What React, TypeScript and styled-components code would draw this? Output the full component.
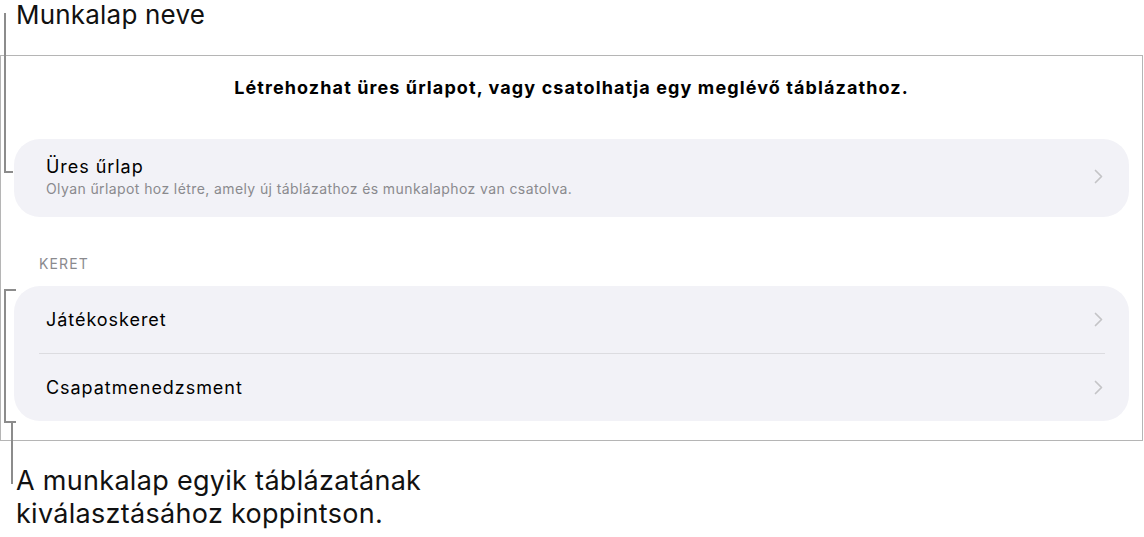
import React from "react";
import styled, { createGlobalStyle } from "styled-components";

const GlobalStyle = createGlobalStyle`
  html, body {
    margin: 0;
    padding: 0;
    background: #ffffff;
  }
  body {
    font-family: Inter, "Noto Sans", "Liberation Sans", sans-serif;
    color: #000;
    -webkit-font-smoothing: antialiased;
  }
`;

type Row = { title: string; subtitle?: string };

const frameRows: Row[] = [{ title: "Játékoskeret" }, { title: "Csapatmenedzsment" }];

const Chevron = () => (
  <svg width="9" height="15" viewBox="0 0 9 15" fill="none">
    <path d="M1.5 1.5L7.5 7.5L1.5 13.5" stroke="#c4c4c7" strokeWidth="1.7" strokeLinecap="round" strokeLinejoin="round" />
  </svg>
);

const App = () => {
  return (
    <>
      <GlobalStyle />
      <Page>
        <Callout>Munkalap neve</Callout>

        <Panel>
          <Heading>Létrehozhat üres űrlapot, vagy csatolhatja egy meglévő táblázathoz.</Heading>

          <Card>
            <Item $tall>
              <ItemText>
                <ItemTitle>Üres űrlap</ItemTitle>
                <ItemSub>Olyan űrlapot hoz létre, amely új táblázathoz és munkalaphoz van csatolva.</ItemSub>
              </ItemText>
              <Chevron />
            </Item>
          </Card>

          <SectionLabel>KERET</SectionLabel>

          <Card>
            {frameRows.map((row, i) => (
              <React.Fragment key={row.title}>
                {i > 0 && <Divider />}
                <Item>
                  <ItemText>
                    <ItemTitle>{row.title}</ItemTitle>
                  </ItemText>
                  <Chevron />
                </Item>
              </React.Fragment>
            ))}
          </Card>
        </Panel>

        <Callout $bottom>
          A munkalap egyik táblázatának
          <br />
          kiválasztásához koppintson.
        </Callout>

        {/* leader lines for the two annotations */}
        <NameLeader />
        <TableBracket />
        <TableStem />
      </Page>
    </>
  );
};

export default App;

const Page = styled.div`
  position: relative;
  width: 1144px;
  height: 537px;
  overflow: hidden;
`;

const Callout = styled.div<{ $bottom?: boolean }>`
  box-sizing: border-box;
  padding-left: 16px;
  color: #111;
  font-size: ${(p) => (p.$bottom ? "27px" : "26px")};
  line-height: ${(p) => (p.$bottom ? "33px" : "30px")};
  letter-spacing: ${(p) => (p.$bottom ? "0.3px" : "0.2px")};
  height: ${(p) => (p.$bottom ? "auto" : "55px")};
  margin-top: ${(p) => (p.$bottom ? "23px" : "0")};
`;

const Panel = styled.div`
  box-sizing: border-box;
  width: 1143px;
  height: 386px;
  border: 1px solid #b5b5b5;
  padding: 0 13px;
  display: flex;
  flex-direction: column;
`;

const Heading = styled.div`
  box-sizing: border-box;
  height: 83px;
  padding: 21px 0 0;
  text-align: center;
  font-size: 18px;
  font-weight: 700;
  line-height: 22px;
  letter-spacing: 1.1px;
  color: #000;
`;

const Card = styled.div`
  display: flex;
  flex-direction: column;
  background: #f2f2f7;
  border-radius: 26px;
`;

const Item = styled.div<{ $tall?: boolean }>`
  box-sizing: border-box;
  display: flex;
  align-items: center;
  justify-content: space-between;
  height: ${(p) => (p.$tall ? "78px" : "67px")};
  padding: ${(p) => (p.$tall ? "0 26px 3px 32px" : "0 26px 0 32px")};
`;

const ItemText = styled.div`
  display: flex;
  flex-direction: column;
  gap: 2px;
`;

const ItemTitle = styled.div`
  font-size: 18px;
  line-height: 22px;
  letter-spacing: 0.95px;
  color: #000;
`;

const ItemSub = styled.div`
  font-size: 14px;
  line-height: 18px;
  letter-spacing: 0.4px;
  color: #8a8a8e;
`;

const Divider = styled.div`
  height: 1px;
  background: #dcdce0;
  margin: 0 24px 0 25px;
`;

const SectionLabel = styled.div`
  box-sizing: border-box;
  height: 69px;
  padding: 38px 0 0 25px;
  font-size: 14px;
  line-height: 18px;
  letter-spacing: 1.1px;
  color: #8a8a8e;
`;

const NameLeader = styled.div`
  position: absolute;
  left: 4px;
  top: 13px;
  width: 7px;
  height: 158px;
  border-left: 2px solid #8c8c8c;
  border-bottom: 2px solid #8c8c8c;
`;

const TableBracket = styled.div`
  position: absolute;
  left: 4px;
  top: 289px;
  width: 10px;
  height: 130px;
  border: 2px solid #8c8c8c;
  border-right: none;
`;

const TableStem = styled.div`
  position: absolute;
  left: 11px;
  top: 421px;
  width: 2px;
  height: 63px;
  background: #8c8c8c;
`;
